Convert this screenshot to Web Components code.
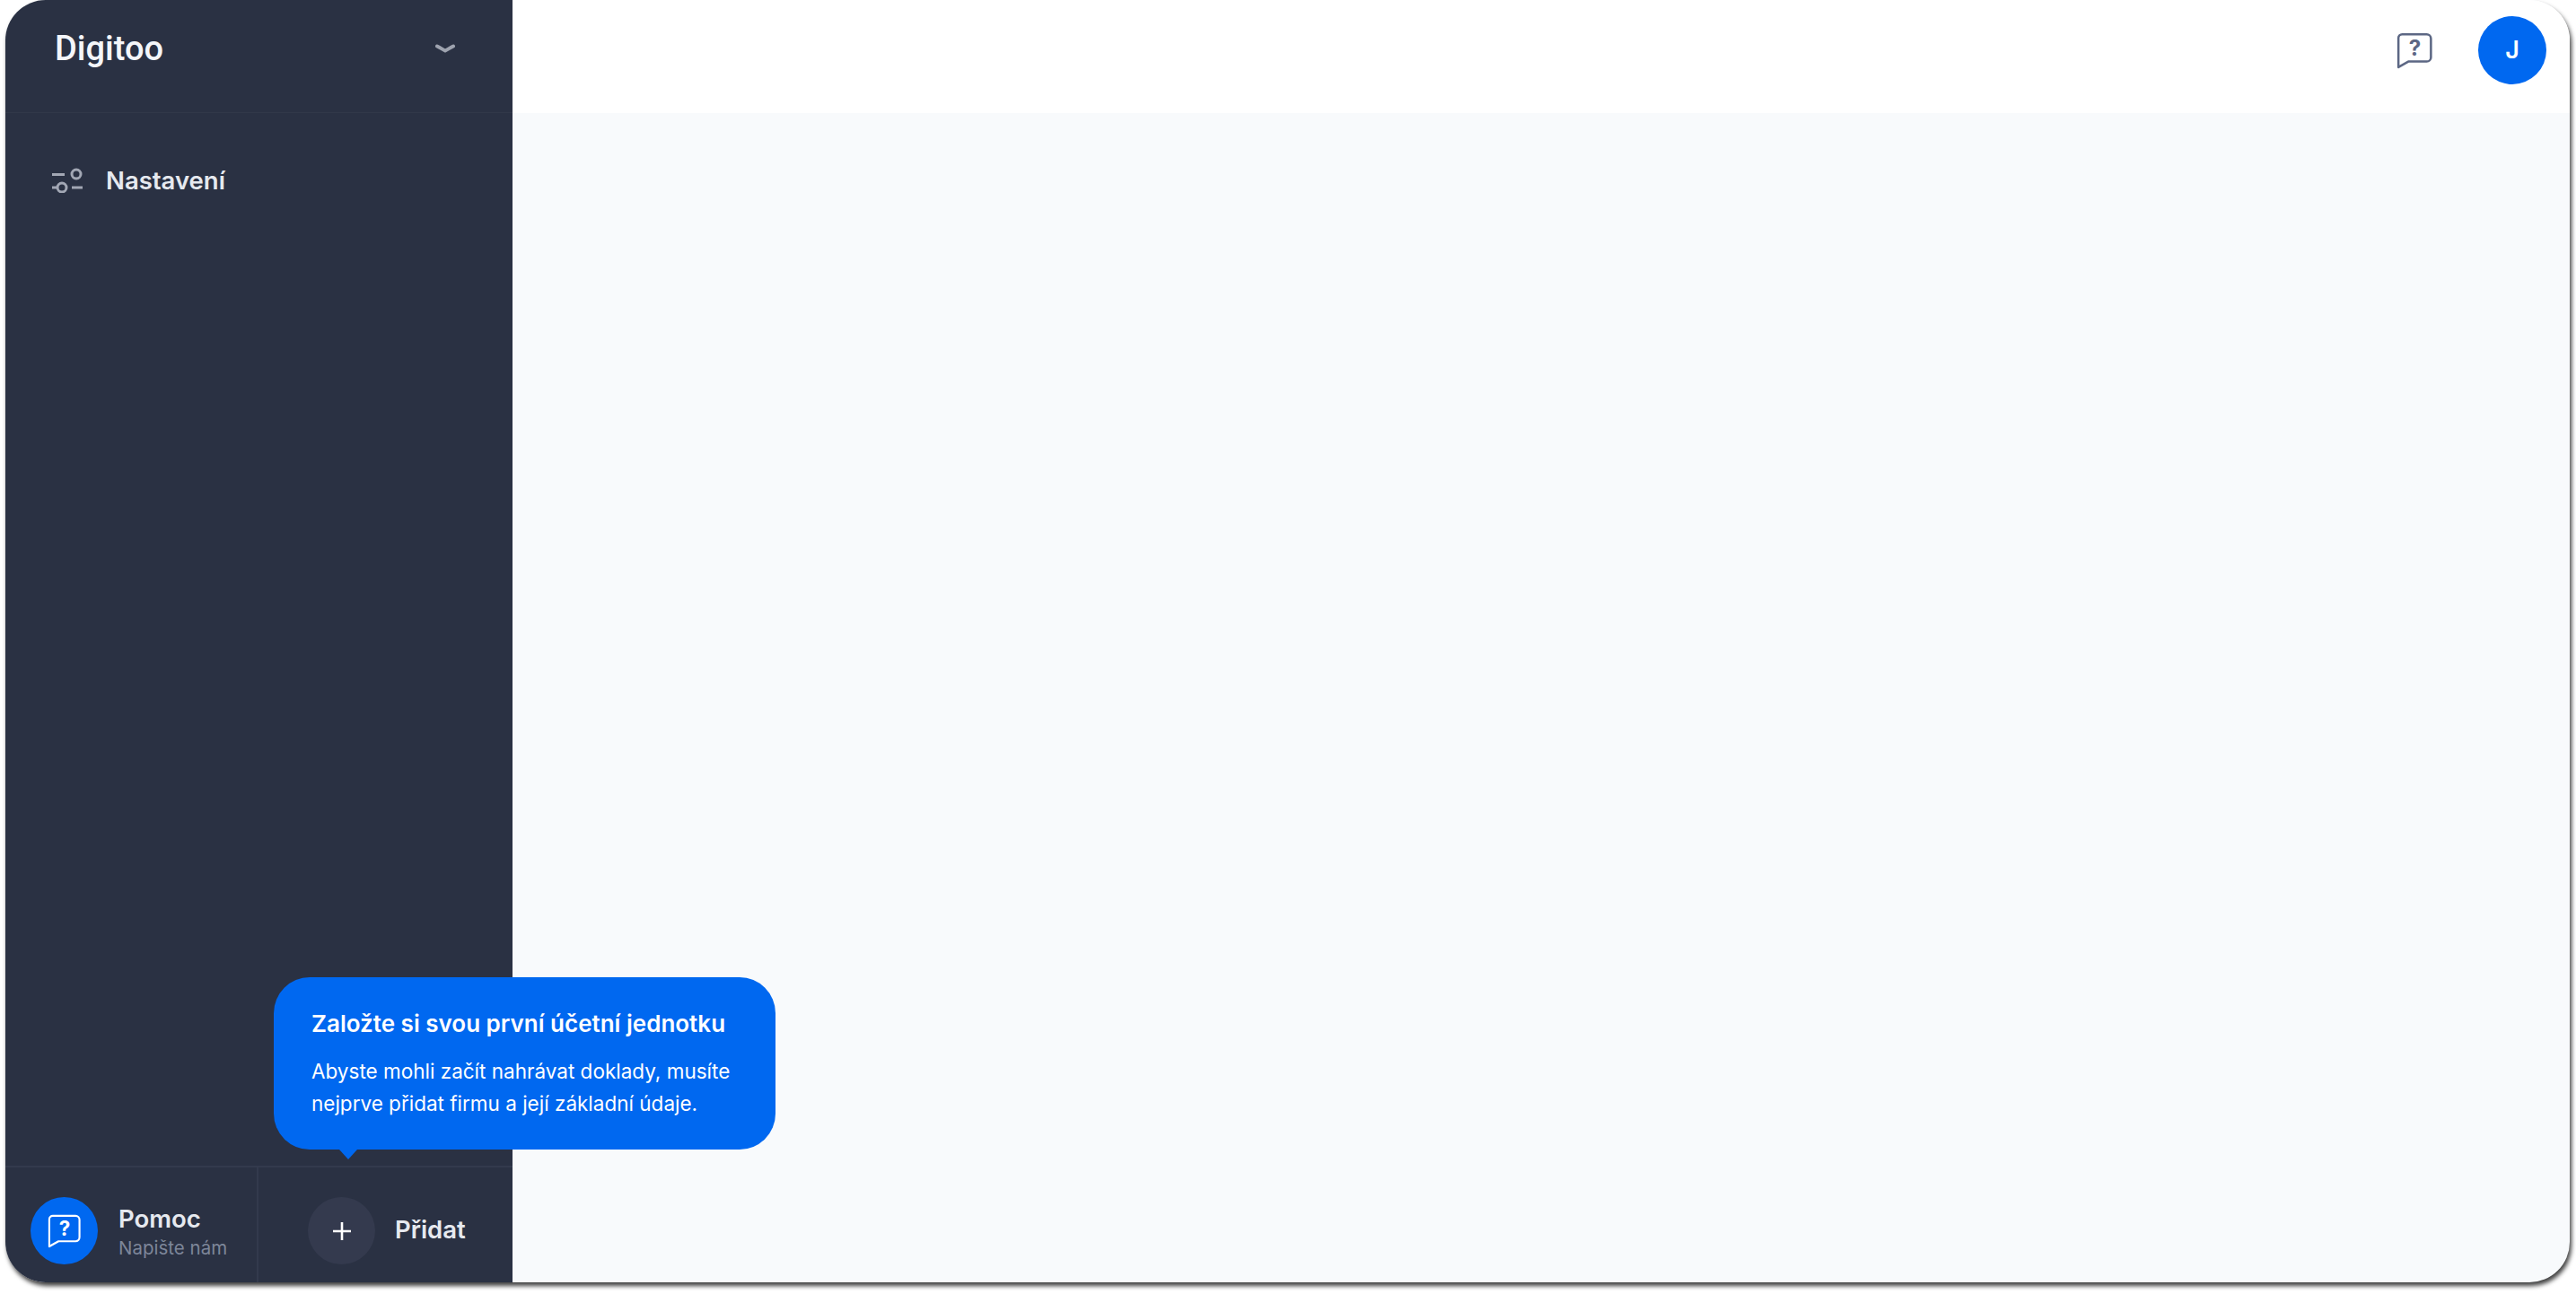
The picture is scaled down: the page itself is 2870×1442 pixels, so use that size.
<!DOCTYPE html>
<html lang="cs">
<head>
<meta charset="utf-8">
<title>Digitoo</title>
<style>
    html, body { margin: 0; height: 100%; background: #fff; }
    body { font-family: Inter, "Noto Sans", sans-serif; }
</style>
</head>
<body>
<app-window>
    <app-sidebar slot="sidebar">
        <nav-item>Nastavení</nav-item>
    </app-sidebar>
    <app-topbar slot="topbar"></app-topbar>
</app-window>

<script>
    const HELP_ICON = (size, stroke, width) => `
        <svg width="${size}" height="${size}" viewBox="0 0 40 40" fill="none" stroke="${stroke}" stroke-width="${width}" stroke-linejoin="round">
            <path d="M7 3h26a4.500 4.500 0 0 1 4.500 4.500v20a4.500 4.500 0 0 1-4.500 4.500H13.500L3 38V7a4 4 0 0 1 4-4z"/>
            <text x="20.500" y="26" text-anchor="middle" font-family="Inter, sans-serif" font-size="23" font-weight="700" fill="${stroke}" stroke="none">?</text>
        </svg>`;

    class AppWindow extends HTMLElement {
        constructor() {
            super();
            const shadow = this.attachShadow({ mode: 'open' });
            shadow.innerHTML = `
            <style>
                :host {
                    display: flex;
                    box-sizing: border-box;
                    width: 2857px;
                    height: 1429px;
                    margin-left: 6px;
                    border-radius: 45px;
                    background: #f8fafc;
                    box-shadow: 2px 4px 5px rgba(0, 0, 0, .75);
                }
                .main { flex: 1; display: flex; flex-direction: column; min-width: 0; }
                .content { flex: 1; }
                ::slotted(app-sidebar) { flex: none; }
            </style>
            <slot name="sidebar"></slot>
            <div class="main">
                <slot name="topbar"></slot>
                <div class="content"></div>
            </div>
            `;
        }
    }
    customElements.define('app-window', AppWindow);

    class AppSidebar extends HTMLElement {
        constructor() {
            super();
            const shadow = this.attachShadow({ mode: 'open' });
            shadow.innerHTML = `
            <style>
                :host {
                    position: relative;
                    display: flex;
                    flex-direction: column;
                    width: 565px;
                    background: #2a3143;
                    border-radius: 45px 0 0 45px;
                    color: #f1f3f7;
                }
                .head {
                    box-sizing: border-box;
                    height: 126px;
                    padding: 0 64px 18px 55px;
                    display: flex;
                    align-items: center;
                    justify-content: space-between;
                    border-bottom: 1px solid #313849;
                    font: 500 38px Roboto, sans-serif;
                    color: #f4f6fa;
                }
                .nav { flex: 1; padding-top: 42px; }
                .foot {
                    box-sizing: border-box;
                    height: 130px;
                    display: flex;
                    border-top: 2px solid #333a4d;
                }
                hint-bubble { position: absolute; left: 299px; bottom: 148px; }
            </style>
            <div class="head">
                <span>Digitoo</span>
                <svg width="22" height="10" viewBox="0 0 22 10" fill="none" stroke="#9ea3af" stroke-width="4" stroke-linecap="round" stroke-linejoin="round"><path d="M2 2.500c4 2 6 3.500 9 5 3-1.500 5-3 9-5"/></svg>
            </div>
            <div class="nav"><slot></slot></div>
            <div class="foot">
                <help-block></help-block>
                <add-block></add-block>
            </div>
            <hint-bubble></hint-bubble>
            `;
        }
    }
    customElements.define('app-sidebar', AppSidebar);

    class NavItem extends HTMLElement {
        constructor() {
            super();
            const shadow = this.attachShadow({ mode: 'open' });
            shadow.innerHTML = `
            <style>
                :host {
                    display: flex;
                    align-items: center;
                    gap: 26px;
                    height: 66px;
                    padding-left: 52px;
                    font: 600 27.500px Inter, sans-serif;
                    color: #e6e9ef;
                }
            </style>
            <svg width="34" height="28" viewBox="0 0 34 28" fill="none" stroke="#a2a7b4" stroke-width="3">
                <path d="M0 7.500h14"/>
                <circle cx="27" cy="7" r="5"/>
                <path d="M0 22h6"/>
                <circle cx="11" cy="22" r="5"/>
                <path d="M22 22h12"/>
            </svg>
            <slot></slot>
            `;
        }
    }
    customElements.define('nav-item', NavItem);

    class HelpBlock extends HTMLElement {
        constructor() {
            super();
            const shadow = this.attachShadow({ mode: 'open' });
            shadow.innerHTML = `
            <style>
                :host {
                    box-sizing: border-box;
                    flex: none;
                    width: 282px;
                    padding: 33px 0 0 28px;
                    display: flex;
                    gap: 23px;
                    border-right: 2px solid #333a4d;
                }
                .dot {
                    flex: none;
                    width: 75px;
                    height: 75px;
                    border-radius: 50%;
                    background: #0068f0;
                    display: flex;
                    align-items: center;
                    justify-content: center;
                }
                .label { font: 600 27.500px/36px Inter, sans-serif; color: #e6e9ef; margin-top: 6px; }
                .sub { font: 400 20.500px/26px Inter, sans-serif; color: #7d8699; margin-top: 2px; white-space: nowrap; }
            </style>
            <div class="dot">${HELP_ICON(39, '#fff', 2.2)}</div>
            <div>
                <div class="label">Pomoc</div>
                <div class="sub">Napište nám</div>
            </div>
            `;
        }
    }
    customElements.define('help-block', HelpBlock);

    class AddBlock extends HTMLElement {
        constructor() {
            super();
            const shadow = this.attachShadow({ mode: 'open' });
            shadow.innerHTML = `
            <style>
                :host {
                    flex: 1;
                    padding: 33px 0 0 55px;
                    display: flex;
                    align-items: flex-start;
                    gap: 22px;
                }
                .dot {
                    flex: none;
                    width: 75px;
                    height: 75px;
                    border-radius: 50%;
                    background: #343a4e;
                    display: flex;
                    align-items: center;
                    justify-content: center;
                }
                .label { font: 600 27.500px/72px Inter, sans-serif; color: #e6e9ef; }
            </style>
            <div class="dot">
                <svg width="20" height="20" viewBox="0 0 20 20" stroke="#fff" stroke-width="2.600"><path d="M10 0v20M0 10h20"/></svg>
            </div>
            <div class="label">Přidat</div>
            `;
        }
    }
    customElements.define('add-block', AddBlock);

    class HintBubble extends HTMLElement {
        constructor() {
            super();
            const shadow = this.attachShadow({ mode: 'open' });
            shadow.innerHTML = `
            <style>
                :host {
                    display: block;
                    box-sizing: border-box;
                    width: 559px;
                    height: 192px;
                    padding: 33px 43px 0 42px;
                    background: #0068f0;
                    border-radius: 40px;
                    color: #fff;
                }
                :host::after {
                    content: "";
                    position: absolute;
                    left: 73px;
                    top: 100%;
                    border: 10px solid transparent;
                    border-top: 11px solid #0068f0;
                    border-bottom: 0;
                }
                .title { font: 600 26px/38px Inter, sans-serif; white-space: nowrap; }
                .body { font: 400 22.500px/36px Inter, sans-serif; margin-top: 16px; white-space: nowrap; }
            </style>
            <div class="title">Založte si svou první účetní jednotku</div>
            <div class="body">Abyste mohli začít nahrávat doklady, musíte<br>nejprve přidat firmu a její základní údaje.</div>
            `;
        }
    }
    customElements.define('hint-bubble', HintBubble);

    class AppTopbar extends HTMLElement {
        constructor() {
            super();
            const shadow = this.attachShadow({ mode: 'open' });
            shadow.innerHTML = `
            <style>
                :host {
                    display: flex;
                    align-items: center;
                    justify-content: flex-end;
                    box-sizing: border-box;
                    height: 126px;
                    padding: 0 26px 14px 0;
                    gap: 50px;
                    background: #fff;
                    border-radius: 0 45px 0 0;
                }
                .avatar {
                    width: 76px;
                    height: 76px;
                    border-radius: 50%;
                    background: #0068f0;
                    color: #fff;
                    font: 600 27px/76px Inter, sans-serif;
                    text-align: center;
                }
            </style>
            ${HELP_ICON(42, '#5c6784', 2.4)}
            <div class="avatar">J</div>
            `;
        }
    }
    customElements.define('app-topbar', AppTopbar);
</script>
</body>
</html>
